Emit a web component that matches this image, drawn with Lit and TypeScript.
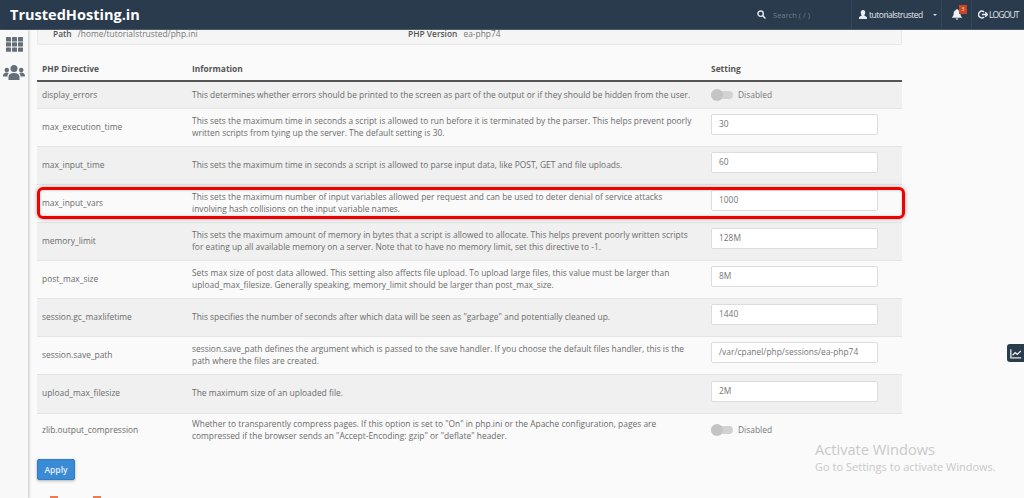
import { LitElement, html, svg, css } from "lit";
import { customElement } from "lit/decorators.js";

type Row = { name: string; info: string[]; value?: string; toggle?: boolean; h: number };

const rows: Row[] = [
  { name: "display_errors", h: 27, toggle: true, info: ["This determines whether errors should be printed to the screen as part of the output or if they should be hidden from the user."] },
  { name: "max_execution_time", h: 38, value: "30", info: ["This sets the maximum time in seconds a script is allowed to run before it is terminated by the parser. This helps prevent poorly", "written scripts from tying up the server. The default setting is 30."] },
  { name: "max_input_time", h: 38, value: "60", info: ["This sets the maximum time in seconds a script is allowed to parse input data, like POST, GET and file uploads."] },
  { name: "max_input_vars", h: 38, value: "1000", info: ["This sets the maximum number of input variables allowed per request and can be used to deter denial of service attacks", "involving hash collisions on the input variable names."] },
  { name: "memory_limit", h: 38, value: "128M", info: ["This sets the maximum amount of memory in bytes that a script is allowed to allocate. This helps prevent poorly written scripts", "for eating up all available memory on a server. Note that to have no memory limit, set this directive to -1."] },
  { name: "post_max_size", h: 38, value: "8M", info: ["Sets max size of post data allowed. This setting also affects file upload. To upload large files, this value must be larger than", "upload_max_filesize. Generally speaking, memory_limit should be larger than post_max_size."] },
  { name: "session.gc_maxlifetime", h: 38, value: "1440", info: ["This specifies the number of seconds after which data will be seen as \"garbage\" and potentially cleaned up."] },
  { name: "session.save_path", h: 38, value: "/var/cpanel/php/sessions/ea-php74", info: ["session.save_path defines the argument which is passed to the save handler. If you choose the default files handler, this is the", "path where the files are created."] },
  { name: "upload_max_filesize", h: 39, value: "2M", info: ["The maximum size of an uploaded file."] },
  { name: "zlib.output_compression", h: 34, toggle: true, info: ["Whether to transparently compress pages. If this option is set to \"On\" in php.ini or the Apache configuration, pages are", "compressed if the browser sends an \"Accept-Encoding: gzip\" or \"deflate\" header."] },
];

@customElement("app-root")
export class AppRoot extends LitElement {
  static styles = css`
    :host {
      display: block;
      position: relative;
      height: 498px;
      overflow: hidden;
      background: #fafafa;
      font-family: "Open Sans", sans-serif;
      font-size: 8.4px;
      letter-spacing: 0.015px;
      color: #6b6b6b;
    }
    .top {
      display: flex;
      align-items: stretch;
      height: 29px;
      background: #2a3b4d;
      border-bottom: 1px solid #4a5866;
      color: #d6dbe0;
    }
    .top > div {
      display: flex;
      align-items: center;
      box-sizing: border-box;
    }
    .brand {
      flex: 1;
      padding-left: 10px;
      font-size: 14.5px;
      font-weight: 700;
      color: #fff;
    }
    .search {
      gap: 7px;
      width: 94px;
      color: #6f7d8b;
      font-size: 7.5px;
    }
    .user {
      gap: 2px;
      width: 90px;
      padding-left: 7px;
      border-left: 1px solid #33465a;
      font-size: 8.5px;
      letter-spacing: -0.5px;
      color: #e2e6ea;
    }
    .caret {
      margin: 3px 0 0 8px;
      border: 2.5px solid transparent;
      border-top-color: #d6dbe0;
    }
    .bell {
      position: relative;
      width: 30px;
      padding-left: 10px;
      border-left: 1px solid #33465a;
    }
    .badge {
      position: absolute;
      left: 17px;
      top: 5px;
      width: 8px;
      height: 9px;
      background: #c8471f;
      color: #eed;
      font-size: 5px;
      line-height: 9px;
      text-align: center;
    }
    .logout {
      gap: 1px;
      width: 53px;
      padding-left: 6px;
      border-left: 1px solid #33465a;
      font-size: 8.5px;
      letter-spacing: -0.85px;
      color: #e2e6ea;
    }
    .body {
      display: flex;
    }
    .side {
      flex: none;
      width: 28px;
      height: 469px;
      display: flex;
      flex-direction: column;
      align-items: center;
      gap: 13px;
      padding-top: 7px;
      box-sizing: border-box;
      background: #f8f8f8;
      box-shadow: 1px 0 3px rgba(0, 0, 0, 0.22);
    }
    .main {
      width: 865px;
      margin-left: 9px;
    }
    .info-panel {
      display: flex;
      height: 15px;
      padding: 0 15px;
      line-height: 7px;
      background: #f5f5f5;
      border: 1px solid #e8e8e8;
      border-top: none;
      border-radius: 0 0 2px 2px;
      box-sizing: border-box;
    }
    .info-panel span { color: #777; }
    .info-panel b { font-weight: 600; color: #555; margin-right: 6px; }
    .info-panel .l { width: 355px; }
    table {
      width: 100%;
      margin-top: 14px;
      border-collapse: collapse;
      table-layout: fixed;
    }
    th {
      padding: 4px 5px 6px;
      line-height: 11px;
      text-align: left;
      font-weight: 700;
      color: #555;
      border-bottom: 2px solid #555;
    }
    td {
      padding: 0 5px;
      line-height: 12.500px;
      border-bottom: 1px solid #e4e4e4;
    }
    tr.odd td { background: #f0f0f0; }
    tr.even td { background: #fafafa; }
    tr:last-child td { border-bottom: none; }
    .c1 { width: 140px; }
    .c3 { width: 186px; }
    .c2 { width: auto; }
    .line { display: block; white-space: nowrap; }
    .input {
      width: 167px;
      height: 21px;
      margin-bottom: 5px;
      box-sizing: border-box;
      padding-left: 7px;
      display: flex;
      align-items: center;
      background: #fff;
      border: 1px solid #dcdcdc;
      border-radius: 2px;
      white-space: nowrap;
      color: #757575;
    }
    .toggle {
      display: flex;
      align-items: center;
      gap: 5px;
      color: #777;
    }
    .track {
      position: relative;
      width: 22px;
      height: 8px;
      background: #d2d2d2;
      border-radius: 4px;
    }
    .track::before {
      content: "";
      position: absolute;
      left: 0;
      top: -2px;
      width: 12px;
      height: 12px;
      border-radius: 50%;
      background: #c4c4c4;
    }
    .apply {
      display: block;
      margin-top: 12px;
      width: 38px;
      height: 21px;
      padding: 0;
      border: 1px solid #2f7cc4;
      border-radius: 2px;
      background: #3a8bd6;
      color: #e8f1fa;
      font-family: inherit;
      font-size: 8.500px;
      font-weight: 600;
      box-shadow: 0 1px 3px rgba(0, 0, 0, 0.3);
    }
    .next {
      display: flex;
      gap: 35px;
      margin: 16px 0 0 13px;
    }
    .next span {
      width: 8px;
      height: 3px;
      background: #ee7a52;
    }
    .highlight {
      position: absolute;
      left: 37px;
      top: 187px;
      width: 868px;
      height: 32px;
      box-sizing: border-box;
      border: 3px solid #f00000;
      border-radius: 6px;
      box-shadow: 0 0 4px rgba(0, 0, 0, 0.35), inset 0 0 3px rgba(0, 0, 0, 0.2);
    }
    .float {
      position: absolute;
      right: 0;
      top: 344px;
      width: 17px;
      height: 18px;
      display: flex;
      align-items: center;
      justify-content: center;
      background: #2a3b4d;
      border-radius: 3px 0 0 3px;
    }
    .wm {
      position: absolute;
      left: 815px;
      top: 440px;
      color: #c9c9c9;
      font-size: 11px;
      line-height: 17px;
      white-space: nowrap;
    }
    .wm div:first-child {
      font-size: 14.600px;
      line-height: 18px;
    }
  `;

  renderRow(r: Row, i: number) {
    return html`
      <tr class=${i % 2 ? "even" : "odd"} style="height:${r.h}px">
        <td class="c1">${r.name}</td>
        <td class="c2">${r.info.map((t) => html`<span class="line">${t}</span>`)}</td>
        <td class="c3">
          ${r.toggle
            ? html`<div class="toggle"><span class="track"></span>Disabled</div>`
            : html`<div class="input">${r.value}</div>`}
        </td>
      </tr>
    `;
  }

  render() {
    return html`
      <div class="top">
        <div class="brand">TrustedHosting.in</div>
        <div class="search">
          <svg width="9" height="9" viewBox="0 0 16 16" fill="none" stroke="#e2e6ea" stroke-width="2.6">
            <circle cx="6.5" cy="6.5" r="4.8"></circle>
            <path d="M10 10l5 5"></path>
          </svg>
          Search ( / )
        </div>
        <div class="user">
          <svg width="8" height="9" viewBox="0 0 16 18" fill="#e8ecef">
            <path d="M8 0c3 0 4.5 2.2 4.5 5S11 10 10.500 11c2 1.200 5.500 2 5.500 4.500V18H0v-2.500C0 13 3.500 12.200 5.500 11 5 10 3.500 8 3.500 5S5 0 8 0z"></path>
          </svg>
          tutorialstrusted
          <span class="caret"></span>
        </div>
        <div class="bell">
          <svg width="10" height="11" viewBox="0 0 16 18" fill="#eef1f3">
            <path d="M8 0a1.500 1.500 0 0 1 1.500 1.500C12 2.200 13.500 4.500 13.500 7.500c0 3 1 4.500 2.500 6v1H0v-1c1.500-1.500 2.500-3 2.500-6 0-3 1.500-5.300 4-6A1.500 1.500 0 0 1 8 0zM6 15.500h4a2 2 0 0 1-4 0z"></path>
          </svg>
          <span class="badge">3</span>
        </div>
        <div class="logout">
          <svg width="10" height="9" viewBox="0 0 18 16" fill="none" stroke="#eef1f3" stroke-width="2.6">
            <path d="M11 3.500A6 6 0 1 0 11 12.500"></path>
            <path d="M7 8h10M13 4l4 4-4 4"></path>
          </svg>
          LOGOUT
        </div>
      </div>
      <div class="body">
        <div class="side">
          <svg width="17" height="15" viewBox="0 0 17 15" fill="#666f78">
            ${[0, 5.2, 10.4].map((y) =>
              [0, 6, 12].map(
                (x) => svg`<rect x=${x} y=${y} width="5" height="4.400" rx="0.500"></rect>`,
              ),
            )}
          </svg>
          <svg width="22" height="15" viewBox="0 0 22 15" fill="#666f78">
            <circle cx="11" cy="3.500" r="3.500"></circle>
            <circle cx="3.800" cy="5" r="2.300"></circle>
            <circle cx="18.200" cy="5" r="2.300"></circle>
            <path d="M5.500 15v-3c0-2.500 2-4 5.500-4s5.500 1.500 5.500 4v3z"></path>
            <path d="M0 11c0-2 1.500-3.500 3.800-3.500 .8 0 1.500.2 2 .5-1 1-1.300 2-1.300 3.500H0z"></path>
            <path d="M22 11c0-2-1.500-3.500-3.800-3.500-.8 0-1.500.2-2 .5 1 1 1.300 2 1.300 3.500H22z"></path>
          </svg>
        </div>
        <div class="main">
          <div class="info-panel">
            <span class="l"><b>Path</b><span>/home/tutorialstrusted/php.ini</span></span>
            <span><b>PHP Version</b><span>ea-php74</span></span>
          </div>
          <table>
            <thead>
              <tr>
                <th class="c1">PHP Directive</th>
                <th class="c2">Information</th>
                <th class="c3">Setting</th>
              </tr>
            </thead>
            <tbody>${rows.map((r, i) => this.renderRow(r, i))}</tbody>
          </table>
          <button class="apply">Apply</button>
          <div class="next"><span></span><span></span></div>
        </div>
      </div>
      <div class="highlight"></div>
      <div class="float">
        <svg width="12" height="11" viewBox="0 0 14 12" fill="none" stroke="#e6eaee" stroke-width="1.500">
          <path d="M1 1v10h12"></path>
          <path d="M3 8l3-3 2.500 2L12.500 3"></path>
        </svg>
      </div>
      <div class="wm">
        <div>Activate Windows</div>
        <div>Go to Settings to activate Windows.</div>
      </div>
    `;
  }
}
